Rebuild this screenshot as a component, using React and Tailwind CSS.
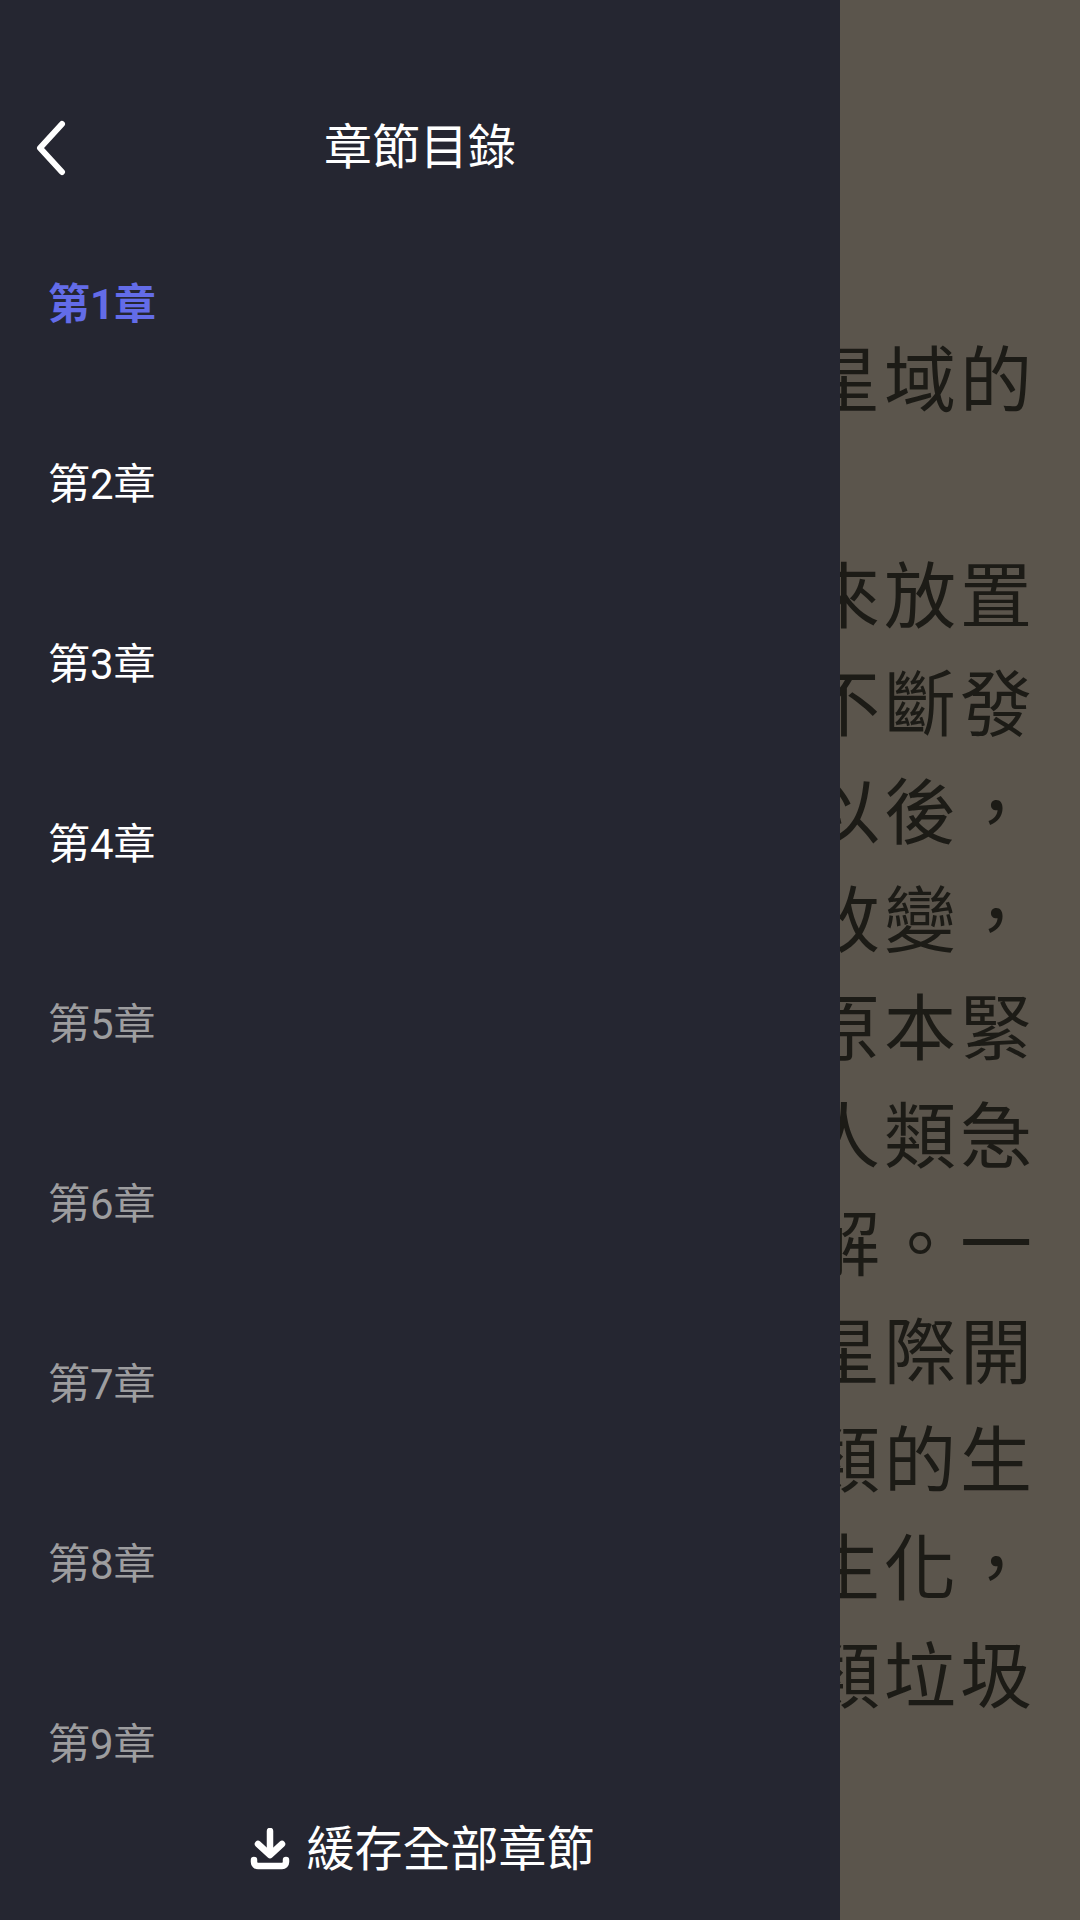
import React from 'react'

const chapters = [
  { label: '第1章', tone: 'active' },
  { label: '第2章', tone: 'read' },
  { label: '第3章', tone: 'read' },
  { label: '第4章', tone: 'read' },
  { label: '第5章', tone: 'idle' },
  { label: '第6章', tone: 'idle' },
  { label: '第7章', tone: 'idle' },
  { label: '第8章', tone: 'idle' },
  { label: '第9章', tone: 'idle' },
]

const readerLines = ['星域的', '', '來放置', '不斷發', '以後，', '改變，', '原本緊', '人類急', '解。一', '星際開', '類的生', '生化，', '類垃圾']

const App = () => {
  return (
    <div className="flex h-[1920px] w-[1080px] overflow-hidden bg-[#5b554c] font-['Roboto','Noto_Sans_CJK_TC',sans-serif]">
      {/* DRAWER */}
      <div className="flex w-[840px] shrink-0 flex-col bg-[#252631]">
        <div className="relative mt-[112px] flex h-[72px] items-center justify-center">
          <button className="absolute left-[36px] top-[8px] text-white">
            <svg width="30" height="56" viewBox="0 0 30 56" fill="none" stroke="currentColor" strokeWidth="6" strokeLinecap="round" strokeLinejoin="round">
              <path d="M26 4 L4 28 L26 52" />
            </svg>
          </button>
          <h1 className="text-[48px] font-normal leading-none text-white">章節目錄</h1>
        </div>

        <div className="mt-[31px] flex min-h-0 flex-1 flex-col overflow-hidden">
          {chapters.map((c) => (
            <div key={c.label} className="flex h-[180px] shrink-0 items-center pl-[48px]">
              <span
                className={
                  c.tone === 'active'
                    ? 'text-[42px] font-bold leading-none text-[#636ce8]'
                    : c.tone === 'read'
                      ? 'text-[42px] leading-none text-white'
                      : 'text-[42px] leading-none text-[#9d9d9f]'
                }
              >
                {c.label}
              </span>
            </div>
          ))}
        </div>

        {/* CACHE ALL */}
        <div className="flex h-[146px] shrink-0 items-center justify-center gap-[16px] pl-[5px] pt-[5px] text-white">
          <svg width="40" height="44" viewBox="0 0 40 44" fill="none" stroke="currentColor" strokeWidth="6.5" strokeLinecap="round" strokeLinejoin="round">
            <path d="M20 3 V25" />
            <path d="M8 16 L20 27 L32 16" />
            <path d="M4 32 V34 A4 4 0 0 0 8 38 H32 A4 4 0 0 0 36 34 V32" />
          </svg>
          <span className="text-[48px] leading-[60px]">緩存全部章節</span>
        </div>
      </div>

      {/* READER BEHIND DRAWER */}
      <div className="flex min-w-0 flex-1 flex-col items-end overflow-hidden pr-[44px] pt-[328px]">
        {readerLines.map((line, i) => (
          <p key={i} className="h-[108px] shrink-0 whitespace-nowrap text-[72px] leading-[108px] tracking-[4px] text-[#1c1b16]">
            {line}
          </p>
        ))}
      </div>
    </div>
  )
}

export default App
